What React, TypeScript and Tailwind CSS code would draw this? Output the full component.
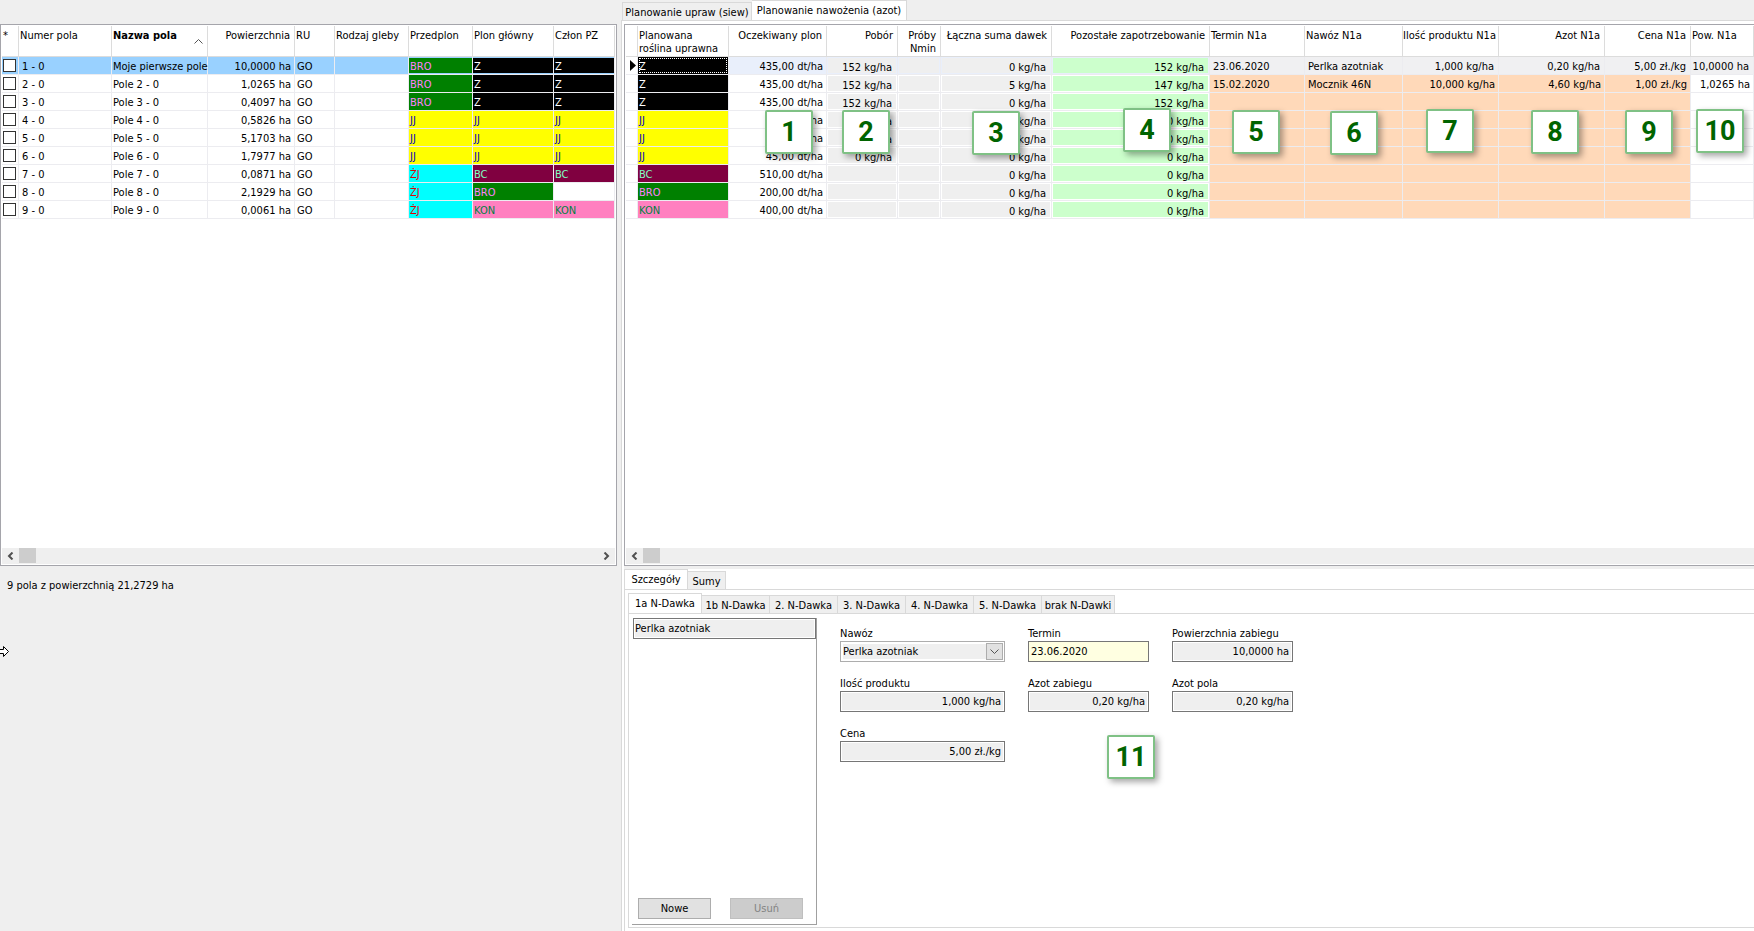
import React, { useState } from 'react';
import clsx from 'clsx';

type CropCode = 'BRO' | 'Z' | 'JJ' | 'BC' | 'KON' | 'ŻJ' | '';

interface Field {
  no: string;
  name: string;
  area: string;
  previous: CropCode;
  main: CropCode;
  pz: CropCode;
}

interface Plan {
  crop: CropCode;
  expected: string;
  uptake: string;
  total: string;
  remaining: string;
  dose: string[];
}

const CROP_STYLES: Record<CropCode, string> = {
  BRO: 'bg-[#008000] text-[#ff80ff]',
  Z: 'bg-black text-white',
  JJ: 'bg-[#ffff00] text-[#0000c8]',
  BC: 'bg-[#800040] text-[#80ffc0]',
  KON: 'bg-[#ff80c0] text-[#008040]',
  ŻJ: 'bg-[#00ffff] text-[#e00000]',
  '': 'bg-white',
};

const FIELDS: Field[] = [
  { no: '1 - 0', name: 'Moje pierwsze pole', area: '10,0000 ha', previous: 'BRO', main: 'Z', pz: 'Z' },
  { no: '2 - 0', name: 'Pole 2 - 0', area: '1,0265 ha', previous: 'BRO', main: 'Z', pz: 'Z' },
  { no: '3 - 0', name: 'Pole 3 - 0', area: '0,4097 ha', previous: 'BRO', main: 'Z', pz: 'Z' },
  { no: '4 - 0', name: 'Pole 4 - 0', area: '0,5826 ha', previous: 'JJ', main: 'JJ', pz: 'JJ' },
  { no: '5 - 0', name: 'Pole 5 - 0', area: '5,1703 ha', previous: 'JJ', main: 'JJ', pz: 'JJ' },
  { no: '6 - 0', name: 'Pole 6 - 0', area: '1,7977 ha', previous: 'JJ', main: 'JJ', pz: 'JJ' },
  { no: '7 - 0', name: 'Pole 7 - 0', area: '0,0871 ha', previous: 'ŻJ', main: 'BC', pz: 'BC' },
  { no: '8 - 0', name: 'Pole 8 - 0', area: '2,1929 ha', previous: 'ŻJ', main: 'BRO', pz: '' },
  { no: '9 - 0', name: 'Pole 9 - 0', area: '0,0061 ha', previous: 'ŻJ', main: 'KON', pz: 'KON' },
];

const NO_DOSE = ['', '', '', '', '', ''];

const PLANS: Plan[] = [
  {
    crop: 'Z', expected: '435,00 dt/ha', uptake: '152 kg/ha', total: '0 kg/ha', remaining: '152 kg/ha',
    dose: ['23.06.2020', 'Perlka azotniak', '1,000 kg/ha', '0,20 kg/ha', '5,00 zł./kg', '10,0000 ha'],
  },
  {
    crop: 'Z', expected: '435,00 dt/ha', uptake: '152 kg/ha', total: '5 kg/ha', remaining: '147 kg/ha',
    dose: ['15.02.2020', 'Mocznik 46N', '10,000 kg/ha', '4,60 kg/ha', '1,00 zł./kg', '1,0265 ha'],
  },
  { crop: 'Z', expected: '435,00 dt/ha', uptake: '152 kg/ha', total: '0 kg/ha', remaining: '152 kg/ha', dose: NO_DOSE },
  { crop: 'JJ', expected: '45,00 dt/ha', uptake: '0 kg/ha', total: '0 kg/ha', remaining: '0 kg/ha', dose: NO_DOSE },
  { crop: 'JJ', expected: '45,00 dt/ha', uptake: '0 kg/ha', total: '0 kg/ha', remaining: '0 kg/ha', dose: NO_DOSE },
  { crop: 'JJ', expected: '45,00 dt/ha', uptake: '0 kg/ha', total: '0 kg/ha', remaining: '0 kg/ha', dose: NO_DOSE },
  { crop: 'BC', expected: '510,00 dt/ha', uptake: '', total: '0 kg/ha', remaining: '0 kg/ha', dose: NO_DOSE },
  { crop: 'BRO', expected: '200,00 dt/ha', uptake: '', total: '0 kg/ha', remaining: '0 kg/ha', dose: NO_DOSE },
  { crop: 'KON', expected: '400,00 dt/ha', uptake: '', total: '0 kg/ha', remaining: '0 kg/ha', dose: NO_DOSE },
];

const DOSE_TABS = [
  { label: '1a N-Dawka', width: 'w-[74px]' },
  { label: '1b N-Dawka', width: 'w-[68px]' },
  { label: '2. N-Dawka', width: 'w-[68px]' },
  { label: '3. N-Dawka', width: 'w-[68px]' },
  { label: '4. N-Dawka', width: 'w-[68px]' },
  { label: '5. N-Dawka', width: 'w-[68px]' },
  { label: 'brak N-Dawki', width: 'w-[73px]' },
];

// Numbered callouts that float over the grid and the form
const MARKERS = [
  { n: 1, place: 'left-[765px] top-[110px]' },
  { n: 2, place: 'left-[842px] top-[110px]' },
  { n: 3, place: 'left-[972px] top-[111px]' },
  { n: 4, place: 'left-[1123px] top-[108px]' },
  { n: 5, place: 'left-[1232px] top-[110px]' },
  { n: 6, place: 'left-[1330px] top-[111px]' },
  { n: 7, place: 'left-[1426px] top-[109px]' },
  { n: 8, place: 'left-[1531px] top-[110px]' },
  { n: 9, place: 'left-[1625px] top-[110px]' },
  { n: 10, place: 'left-[1696px] top-[109px]' },
  { n: 11, place: 'left-[1107px] top-[735px]' },
];

const HeaderCell: React.FC<{ children?: React.ReactNode; right?: boolean; bold?: boolean }> = ({ children, right, bold }) => (
  <th
    scope="col"
    className={clsx(
      'h-[31px] border-r border-b border-[#dcdcdc] pt-[3px] align-top leading-[13px] whitespace-nowrap',
      right ? 'pr-1 text-right' : 'pl-px text-left',
      bold ? 'font-bold' : 'font-normal'
    )}
  >
    {children}
  </th>
);

const Cell: React.FC<{ children?: React.ReactNode; className?: string }> = ({ children, className }) => (
  <td className={clsx('h-[18px] border-r border-b border-[#ececf0] p-0 leading-[15px] whitespace-nowrap', className)}>{children}</td>
);

const CropCell: React.FC<{ code: CropCode; selected?: boolean; focused?: boolean }> = ({ code, selected, focused }) => (
  <Cell>
    <div
      className={clsx(
        'h-[17px] px-px',
        CROP_STYLES[code],
        selected ? 'border-y border-[#99d1ff] pt-px' : 'pt-0.5',
        focused && 'outline-1 -outline-offset-2 outline-dotted outline-white'
      )}
    >
      {code}
    </div>
  </Cell>
);

const ReadOnlyCell: React.FC<{ value: string; selected: boolean; green?: boolean }> = ({ value, selected, green }) => (
  <Cell className="text-right">
    <div
      className={clsx(
        'h-[17px] border pt-0.5 pr-1 leading-[15px]',
        green ? 'bg-[#ccffcc]' : 'bg-[#efefef]',
        selected ? 'border-[#e9effb]' : 'border-white'
      )}
    >
      {value}
    </div>
  </Cell>
);

const Chevron: React.FC<{ flip?: boolean }> = ({ flip }) => (
  <svg viewBox="0 0 7 8" className={clsx('h-2 w-[7px]', flip && 'rotate-180')} fill="none" stroke="#505050" strokeWidth="2">
    <path d="M5.5 0.5 L2 4 L5.5 7.5" />
  </svg>
);

const ScrollBar: React.FC<{ end?: boolean }> = ({ end }) => (
  <div className="flex h-4 shrink-0 bg-[#efefef]">
    <button type="button" aria-label="Przewiń w lewo" className="flex w-[17px] items-center justify-center">
      <Chevron />
    </button>
    <div className="h-[15px] w-[17px] bg-[#cdcdcd]"></div>
    {end && (
      <button type="button" aria-label="Przewiń w prawo" className="ml-auto flex w-[17px] items-center justify-center">
        <Chevron flip />
      </button>
    )}
  </div>
);

const FieldsGrid: React.FC = () => (
  <div className="flex h-[542px] flex-col border border-[#a5a5ab] bg-white p-px">
    <div className="min-h-0 flex-1 overflow-hidden">
      <table className="w-full table-fixed border-separate border-spacing-0">
        <colgroup>
          <col className="w-[17px]" />
          <col className="w-[93px]" />
          <col className="w-[96px]" />
          <col className="w-[87px]" />
          <col className="w-[40px]" />
          <col className="w-[74px]" />
          <col className="w-[64px]" />
          <col className="w-[81px]" />
          <col />
        </colgroup>
        <thead>
          <tr>
            <HeaderCell>*</HeaderCell>
            <HeaderCell>Numer pola</HeaderCell>
            <HeaderCell bold>
              <div className="flex justify-between">
                <span>Nazwa pola</span>
                <svg viewBox="0 0 9 5" className="mt-2.5 mr-1 h-[5px] w-[9px]" fill="none" stroke="#555">
                  <path d="M0.5 4.5 L4.5 0.5 L8.5 4.5" />
                </svg>
              </div>
            </HeaderCell>
            <HeaderCell right>Powierzchnia</HeaderCell>
            <HeaderCell>RU</HeaderCell>
            <HeaderCell>Rodzaj gleby</HeaderCell>
            <HeaderCell>Przedplon</HeaderCell>
            <HeaderCell>Plon główny</HeaderCell>
            <HeaderCell>Człon PZ</HeaderCell>
          </tr>
        </thead>
        <tbody>
          {FIELDS.map((field, i) => (
            <tr key={field.no} className={i === 0 ? 'bg-[#99d1ff]' : 'bg-white'}>
              <Cell>
                <input
                  type="checkbox"
                  aria-label={field.name}
                  className="ml-px block size-[13px] appearance-none border border-[#333] bg-white checked:bg-[#333]"
                />
              </Cell>
              <Cell className="pt-0.5 pl-[3px]">{field.no}</Cell>
              <Cell className="pt-0.5 pl-px">{field.name}</Cell>
              <Cell className="pt-0.5 pr-[3px] text-right">{field.area}</Cell>
              <Cell className="pt-0.5 pl-0.5">GO</Cell>
              <Cell />
              <CropCell code={field.previous} selected={i === 0} />
              <CropCell code={field.main} selected={i === 0} />
              <CropCell code={field.pz} selected={i === 0} />
            </tr>
          ))}
        </tbody>
      </table>
    </div>
    <ScrollBar end />
  </div>
);

const PlanGrid: React.FC = () => (
  <div className="ml-0.5 flex h-[542px] flex-col border border-r-0 border-[#a5a5ab] bg-white py-px pl-px">
    <div className="min-h-0 flex-1 overflow-hidden">
      <table className="w-full table-fixed border-separate border-spacing-0">
        <colgroup>
          <col className="w-[12px]" />
          <col className="w-[91px]" />
          <col className="w-[98px]" />
          <col className="w-[71px]" />
          <col className="w-[43px]" />
          <col className="w-[111px]" />
          <col className="w-[158px]" />
          <col className="w-[95px]" />
          <col className="w-[98px]" />
          <col className="w-[96px]" />
          <col className="w-[106px]" />
          <col className="w-[86px]" />
          <col />
        </colgroup>
        <thead>
          <tr>
            <HeaderCell />
            <HeaderCell>Planowana<br />roślina uprawna</HeaderCell>
            <HeaderCell right>Oczekiwany plon</HeaderCell>
            <HeaderCell right>Pobór</HeaderCell>
            <HeaderCell right>Próby<br />Nmin</HeaderCell>
            <HeaderCell right>Łączna suma dawek</HeaderCell>
            <HeaderCell right>Pozostałe zapotrzebowanie</HeaderCell>
            <HeaderCell>Termin N1a</HeaderCell>
            <HeaderCell>Nawóz N1a</HeaderCell>
            <HeaderCell right>Ilość produktu N1a</HeaderCell>
            <HeaderCell right>Azot N1a</HeaderCell>
            <HeaderCell right>Cena N1a</HeaderCell>
            <HeaderCell>Pow. N1a</HeaderCell>
          </tr>
        </thead>
        <tbody>
          {PLANS.map((plan, i) => {
            const selected = i === 0;
            return (
              <tr key={i} className={selected ? 'bg-[#e9effb]' : 'bg-white'}>
                <Cell className="bg-white">
                  {selected && (
                    <svg viewBox="0 0 6 11" className="ml-1 h-[11px] w-1.5">
                      <path d="M0 0 L6 5.5 L0 11 Z" />
                    </svg>
                  )}
                </Cell>
                <CropCell code={plan.crop} focused={selected} />
                <Cell className="pt-0.5 pr-[3px] text-right">{plan.expected}</Cell>
                <ReadOnlyCell value={plan.uptake} selected={selected} />
                <ReadOnlyCell value="" selected={selected} />
                <ReadOnlyCell value={plan.total} selected={selected} />
                <ReadOnlyCell value={plan.remaining} selected={selected} green />
                {plan.dose.map((value, j) => (
                  <Cell
                    key={j}
                    className={clsx(
                      j < 2 ? 'pl-[3px]' : 'text-right',
                      j >= 2 && (selected ? 'pr-1' : 'pr-[3px]'),
                      selected ? 'bg-[#f0f0f2] pt-0.5' : 'pt-px',
                      !selected && (j < 5 ? 'bg-[#ffd9b9]' : 'bg-white')
                    )}
                  >
                    {value}
                  </Cell>
                ))}
              </tr>
            );
          })}
        </tbody>
      </table>
    </div>
    <ScrollBar />
  </div>
);

const ValueField: React.FC<{ id: string; label: string; value: string; editable?: boolean }> = ({ id, label, value, editable }) => (
  <div className="flex flex-col">
    <label htmlFor={id} className="h-4 leading-[18px] whitespace-nowrap">{label}</label>
    <input
      id={id}
      defaultValue={value}
      readOnly={!editable}
      className={clsx(
        'h-[21px] w-full border border-[#767676] px-0.5',
        editable ? 'bg-[#ffffe1]' : 'bg-[#efefef] pr-[3px] text-right inset-ring inset-ring-white'
      )}
    />
  </div>
);

const DoseForm: React.FC = () => (
  <form className="grid grid-cols-[165px_121px_121px] content-start gap-x-[23px] gap-y-[13px] pt-[11px] pl-[23px]">
    <div className="flex flex-col">
      <label htmlFor="fertilizer" className="h-4 leading-[18px]">Nawóz</label>
      <div className="relative">
        <select
          id="fertilizer"
          className="block h-[21px] w-full appearance-none border border-[#adadad] bg-[#efefef] pt-px pl-0.5 inset-ring-2 inset-ring-white"
        >
          <option>Perlka azotniak</option>
          <option>Mocznik 46N</option>
        </select>
        <span className="pointer-events-none absolute top-0.5 right-0.5 flex h-[17px] w-[17px] items-center justify-center border border-[#adadad] bg-[#e1e1e1]">
          <svg viewBox="0 0 9 6" className="h-1.5 w-[9px]" fill="none" stroke="#555">
            <path d="M0.5 0.5 L4.5 4.5 L8.5 0.5" />
          </svg>
        </span>
      </div>
    </div>
    <ValueField id="date" label="Termin" value="23.06.2020" editable />
    <ValueField id="area" label="Powierzchnia zabiegu" value="10,0000 ha" />
    <ValueField id="amount" label="Ilość produktu" value="1,000 kg/ha" />
    <ValueField id="nitrogen" label="Azot zabiegu" value="0,20 kg/ha" />
    <ValueField id="field-nitrogen" label="Azot pola" value="0,20 kg/ha" />
    <ValueField id="price" label="Cena" value="5,00 zł./kg" />
  </form>
);

interface TabProps {
  label: string;
  active: boolean;
  width: string;
  onClick: () => void;
}

const Tab: React.FC<TabProps> = ({ label, active, width, onClick }) => (
  <button
    type="button"
    role="tab"
    aria-selected={active}
    onClick={onClick}
    className={clsx(
      'flex shrink-0 justify-center border-t border-r border-[#d9d9d9] leading-[20px] whitespace-nowrap first:border-l',
      width,
      active ? '-mb-px h-[21px] bg-white' : 'h-[18px] bg-[#efefef]'
    )}
  >
    {label}
  </button>
);

const App: React.FC = () => {
  const [planTab, setPlanTab] = useState(1);
  const [detailTab, setDetailTab] = useState(0);
  const [doseTab, setDoseTab] = useState(0);

  return (
    <div className="relative flex min-h-screen overflow-hidden bg-[#efefef] font-['DejaVu_Sans_Condensed','DejaVu_Sans',sans-serif] text-[11px] text-black">
      <aside className="w-[617px] shrink-0 pt-6">
        <FieldsGrid />
        <p className="pt-[13px] pl-[7px] leading-[14px]">9 pola z powierzchnią 21,2729 ha</p>
        <svg viewBox="0 0 10 11" className="mt-[53px] h-[11px] w-2.5" fill="white" stroke="black">
          <path d="M-1 3.5 H3.5 V0.5 L8.5 5.5 L3.5 10.5 V7.5 H-1" />
        </svg>
      </aside>

      <main className="ml-1 flex min-w-0 flex-1 flex-col">
        <div role="tablist" className="flex h-5 items-end pl-px">
          <Tab label="Planowanie upraw (siew)" width="w-[130px]" active={planTab === 0} onClick={() => setPlanTab(0)} />
          <Tab label="Planowanie nawożenia (azot)" width="w-[155px]" active={planTab === 1} onClick={() => setPlanTab(1)} />
        </div>
        <div className="flex flex-1 flex-col border-t border-l border-[#d9d9d9] bg-white pt-[3px]">
          <PlanGrid />
          <div className="ml-0.5 flex flex-1 flex-col border-t-[3px] border-[#efefef]">
            <div role="tablist" className="flex h-5 items-end">
              <Tab label="Szczegóły" width="w-[64px]" active={detailTab === 0} onClick={() => setDetailTab(0)} />
              <Tab label="Sumy" width="w-[38px]" active={detailTab === 1} onClick={() => setDetailTab(1)} />
            </div>
            <div className="flex flex-1 flex-col border-t border-l border-[#d9d9d9] pt-[3px] pb-[3px] pl-[3px]">
              <div role="tablist" className="flex h-5 items-end">
                {DOSE_TABS.map((tab, i) => (
                  <Tab key={tab.label} label={tab.label} width={tab.width} active={doseTab === i} onClick={() => setDoseTab(i)} />
                ))}
              </div>
              <div className="flex flex-1 border-t border-b border-l border-[#d9d9d9] pb-0.5 pl-[3px]">
                <div className="mt-1 flex w-[185px] flex-col border-r border-b border-[#a0a0a0] pl-px">
                  <div className="h-[21px] border border-[#767676] bg-[#efefef] px-px leading-[19px] inset-ring inset-ring-white">Perlka azotniak</div>
                  <div className="mt-auto flex gap-[19px] pb-[5px] pl-[5px]">
                    <button type="button" className="h-[21px] w-[73px] border border-[#adadad] bg-[#e1e1e1] pt-0.5">Nowe</button>
                    <button type="button" disabled className="h-[21px] w-[73px] border border-[#bfbfbf] bg-[#cccccc] pt-0.5 text-[#838383]">Usuń</button>
                  </div>
                </div>
                <DoseForm />
              </div>
            </div>
          </div>
        </div>
      </main>

      {MARKERS.map(({ n, place }) => (
        <span
          key={n}
          className={clsx(
            'absolute flex h-11 w-12 items-center justify-center rounded-xs border-2 border-[#7fc185] bg-white font-[family-name:Roboto,Arial,sans-serif] text-[27px] font-bold text-[#006400] shadow-[3px_3px_6px_rgba(0,0,0,0.35)]',
            place
          )}
        >
          {n}
        </span>
      ))}
    </div>
  );
};

export default App;
